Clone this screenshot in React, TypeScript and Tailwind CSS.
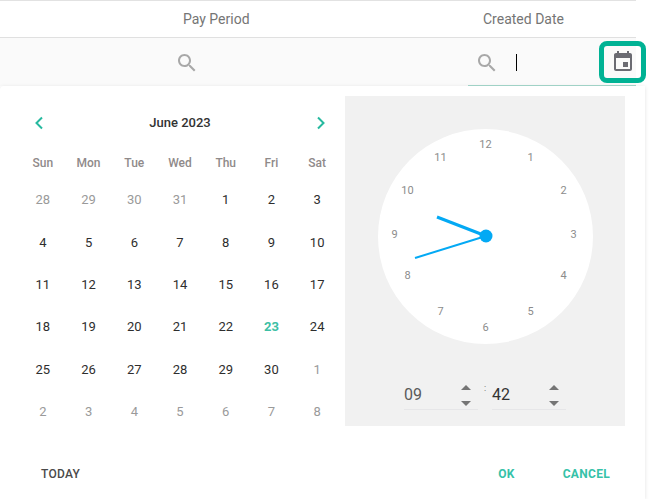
const weekDays = ['Sun', 'Mon', 'Tue', 'Wed', 'Thu', 'Fri', 'Sat'];

const days = [
  [28, true], [29, true], [30, true], [31, true], [1], [2], [3],
  [4], [5], [6], [7], [8], [9], [10],
  [11], [12], [13], [14], [15], [16], [17],
  [18], [19], [20], [21], [22], [23], [24],
  [25], [26], [27], [28], [29], [30], [1, true],
  [2, true], [3, true], [4, true], [5, true], [6, true], [7, true], [8, true],
] as [number, boolean?][];

// clock face numbers sit on a free canvas inside the circle
const clockNumbers = [
  { n: 12, cls: 'left-[108px] top-[15.5px]' },
  { n: 1, cls: 'left-[153px] top-[28.5px]' },
  { n: 2, cls: 'left-[186px] top-[61.5px]' },
  { n: 3, cls: 'left-[196px] top-[105.5px]' },
  { n: 4, cls: 'left-[186px] top-[146.5px]' },
  { n: 5, cls: 'left-[153px] top-[182.5px]' },
  { n: 6, cls: 'left-[108px] top-[198.5px]' },
  { n: 7, cls: 'left-[63px] top-[182.5px]' },
  { n: 8, cls: 'left-[30px] top-[146.5px]' },
  { n: 9, cls: 'left-[17px] top-[105.5px]' },
  { n: 10, cls: 'left-[30px] top-[61.5px]' },
  { n: 11, cls: 'left-[63px] top-[28.5px]' },
];

function SearchIcon() {
  return (
    <svg width="24" height="24" viewBox="0 0 24 24" fill="#a8a8a8">
      <path d="M15.5 14h-.79l-.28-.27C15.41 12.59 16 11.11 16 9.5 16 5.91 13.09 3 9.5 3S3 5.91 3 9.5 5.91 16 9.5 16c1.61 0 3.09-.59 4.23-1.57l.27.28v.79l5 4.99L20.49 19l-4.99-5zm-6 0C7.01 14 5 11.99 5 9.5S7.01 5 9.5 5 14 7.01 14 9.5 11.99 14 9.5 14z" />
    </svg>
  );
}

function Spinner() {
  return (
    <div className="flex flex-col gap-[11px] mr-[7px] mt-[4px]">
      <div className="w-0 h-0 border-x-[5px] border-x-transparent border-b-[5px] border-b-[#757575]" />
      <div className="w-0 h-0 border-x-[5px] border-x-transparent border-t-[5px] border-t-[#757575]" />
    </div>
  );
}

function TimeField({ value, color }: { value: string; color: string }) {
  return (
    <div className="w-[74px] h-[33px] flex items-center justify-between border-b border-[#e6e6e8]">
      <span className={`text-base leading-none mt-[4px] ${color}`}>{value}</span>
      <Spinner />
    </div>
  );
}

export default function App() {
  return (
    <div className="relative w-[654px] h-[499px] overflow-hidden bg-white font-['Roboto',sans-serif]">
      <div className="w-[636px] border-t border-[#e2e2e2]">
        <div className="h-[37px] grid grid-cols-[468px_168px] items-center border-b border-[#e0e0e0] text-sm text-[#757575]">
          <div className="pl-[183px] pb-px">Pay Period</div>
          <div className="pl-[15px] pb-px">Created Date</div>
        </div>
        <div className="h-[48px] grid grid-cols-[468px_168px] bg-[#fafafa]">
          <div className="pl-[175px] pt-[13px]">
            <SearchIcon />
          </div>
          <div className="flex items-start pl-[7px] pt-[13px] border-b border-[#a5d8cc]">
            <SearchIcon />
            <div className="w-px h-[17px] mt-[3px] bg-black ml-[17px]" />
          </div>
        </div>
      </div>

      <div className="absolute left-[599px] top-[41px] w-[47px] h-[42px] rounded-lg border-[5px] border-[#00b294] flex items-center justify-center">
        <svg width="24" height="24" viewBox="0 0 24 24" fill="#6b6b72">
          <path d="M17 12h-5v5h5v-5zM16 1v2H8V1H6v2H5c-1.11 0-1.99.9-1.99 2L3 19c0 1.1.89 2 2 2h14c1.1 0 2-.9 2-2V5c0-1.1-.9-2-2-2h-1V1h-2zm3 18H5V8h14v11z" />
        </svg>
      </div>

      <div className="absolute left-0 top-[86px] w-[645px] h-[413px] bg-white rounded-tl shadow-[0_1px_4px_rgba(0,0,0,0.12)] flex flex-col">
        <div className="flex">
          <div className="w-[345px] pl-5 pr-[5px]">
            <div className="h-[68px] flex items-center justify-between pl-[14px] pr-[14px] pt-[5px] text-[#26b99f]">
              <svg width="10" height="14" viewBox="0 0 10 14" fill="none" stroke="currentColor" strokeWidth="2">
                <path d="M8 1.5 2.5 7 8 12.5" />
              </svg>
              <span className="text-[13px] font-medium text-[#333]">June 2023</span>
              <svg width="10" height="14" viewBox="0 0 10 14" fill="none" stroke="currentColor" strokeWidth="2">
                <path d="M2 1.5 7.5 7 2 12.5" />
              </svg>
            </div>
            <div className="grid grid-cols-7 h-[19px] mb-[6px] text-center text-xs leading-[19px] font-medium text-[#8f8a8a]">
              {weekDays.map((d) => (
                <div key={d}>{d}</div>
              ))}
            </div>
            <div className="grid grid-cols-7 auto-rows-[42.3px] text-center text-[13px]">
              {days.map(([d, muted], i) => (
                <div
                  key={i}
                  className={`flex items-center justify-center ${
                    d === 23 ? 'font-bold text-[#3cbfa5]' : muted ? 'text-[#9a9a9a]' : 'text-[#2e2e2e]'
                  }`}
                >
                  {d}
                </div>
              ))}
            </div>
          </div>

          <div className="w-[280px] h-[330px] mt-[10px] bg-[#f1f1f1] flex flex-col items-center">
            <div className="relative w-[215px] h-[215px] mt-[33px] rounded-full bg-white text-[11px] text-[#8c8c8c]">
              {clockNumbers.map(({ n, cls }) => (
                <span key={n} className={`absolute -translate-x-1/2 -translate-y-1/2 ${cls}`}>
                  {n}
                </span>
              ))}
              <svg className="absolute inset-0" width="215" height="215" viewBox="0 0 215 215">
                <line x1="108" y1="107" x2="59" y2="88" stroke="#03a9f4" strokeWidth="3" />
                <line x1="108" y1="107" x2="37" y2="129" stroke="#03a9f4" strokeWidth="2" />
                <circle cx="108" cy="107" r="6.5" fill="#03a9f4" />
              </svg>
            </div>
            <div className="flex mt-[33px]">
              <TimeField value="09" color="text-[#5a5a5a]" />
              <div className="w-[14px] text-center text-[9px] leading-none mt-[7px] text-[#666]">:</div>
              <TimeField value="42" color="text-[#333]" />
            </div>
          </div>
        </div>

        <div className="flex items-center justify-between h-[30px] mt-[26px] pl-[41px] pr-[35px] text-xs font-medium tracking-[0.3px]">
          <span className="text-[#4a4a4a]">TODAY</span>
          <div className="flex gap-[48px] font-bold text-[#36c2a8]">
            <span>OK</span>
            <span>CANCEL</span>
          </div>
        </div>
      </div>
    </div>
  );
}
